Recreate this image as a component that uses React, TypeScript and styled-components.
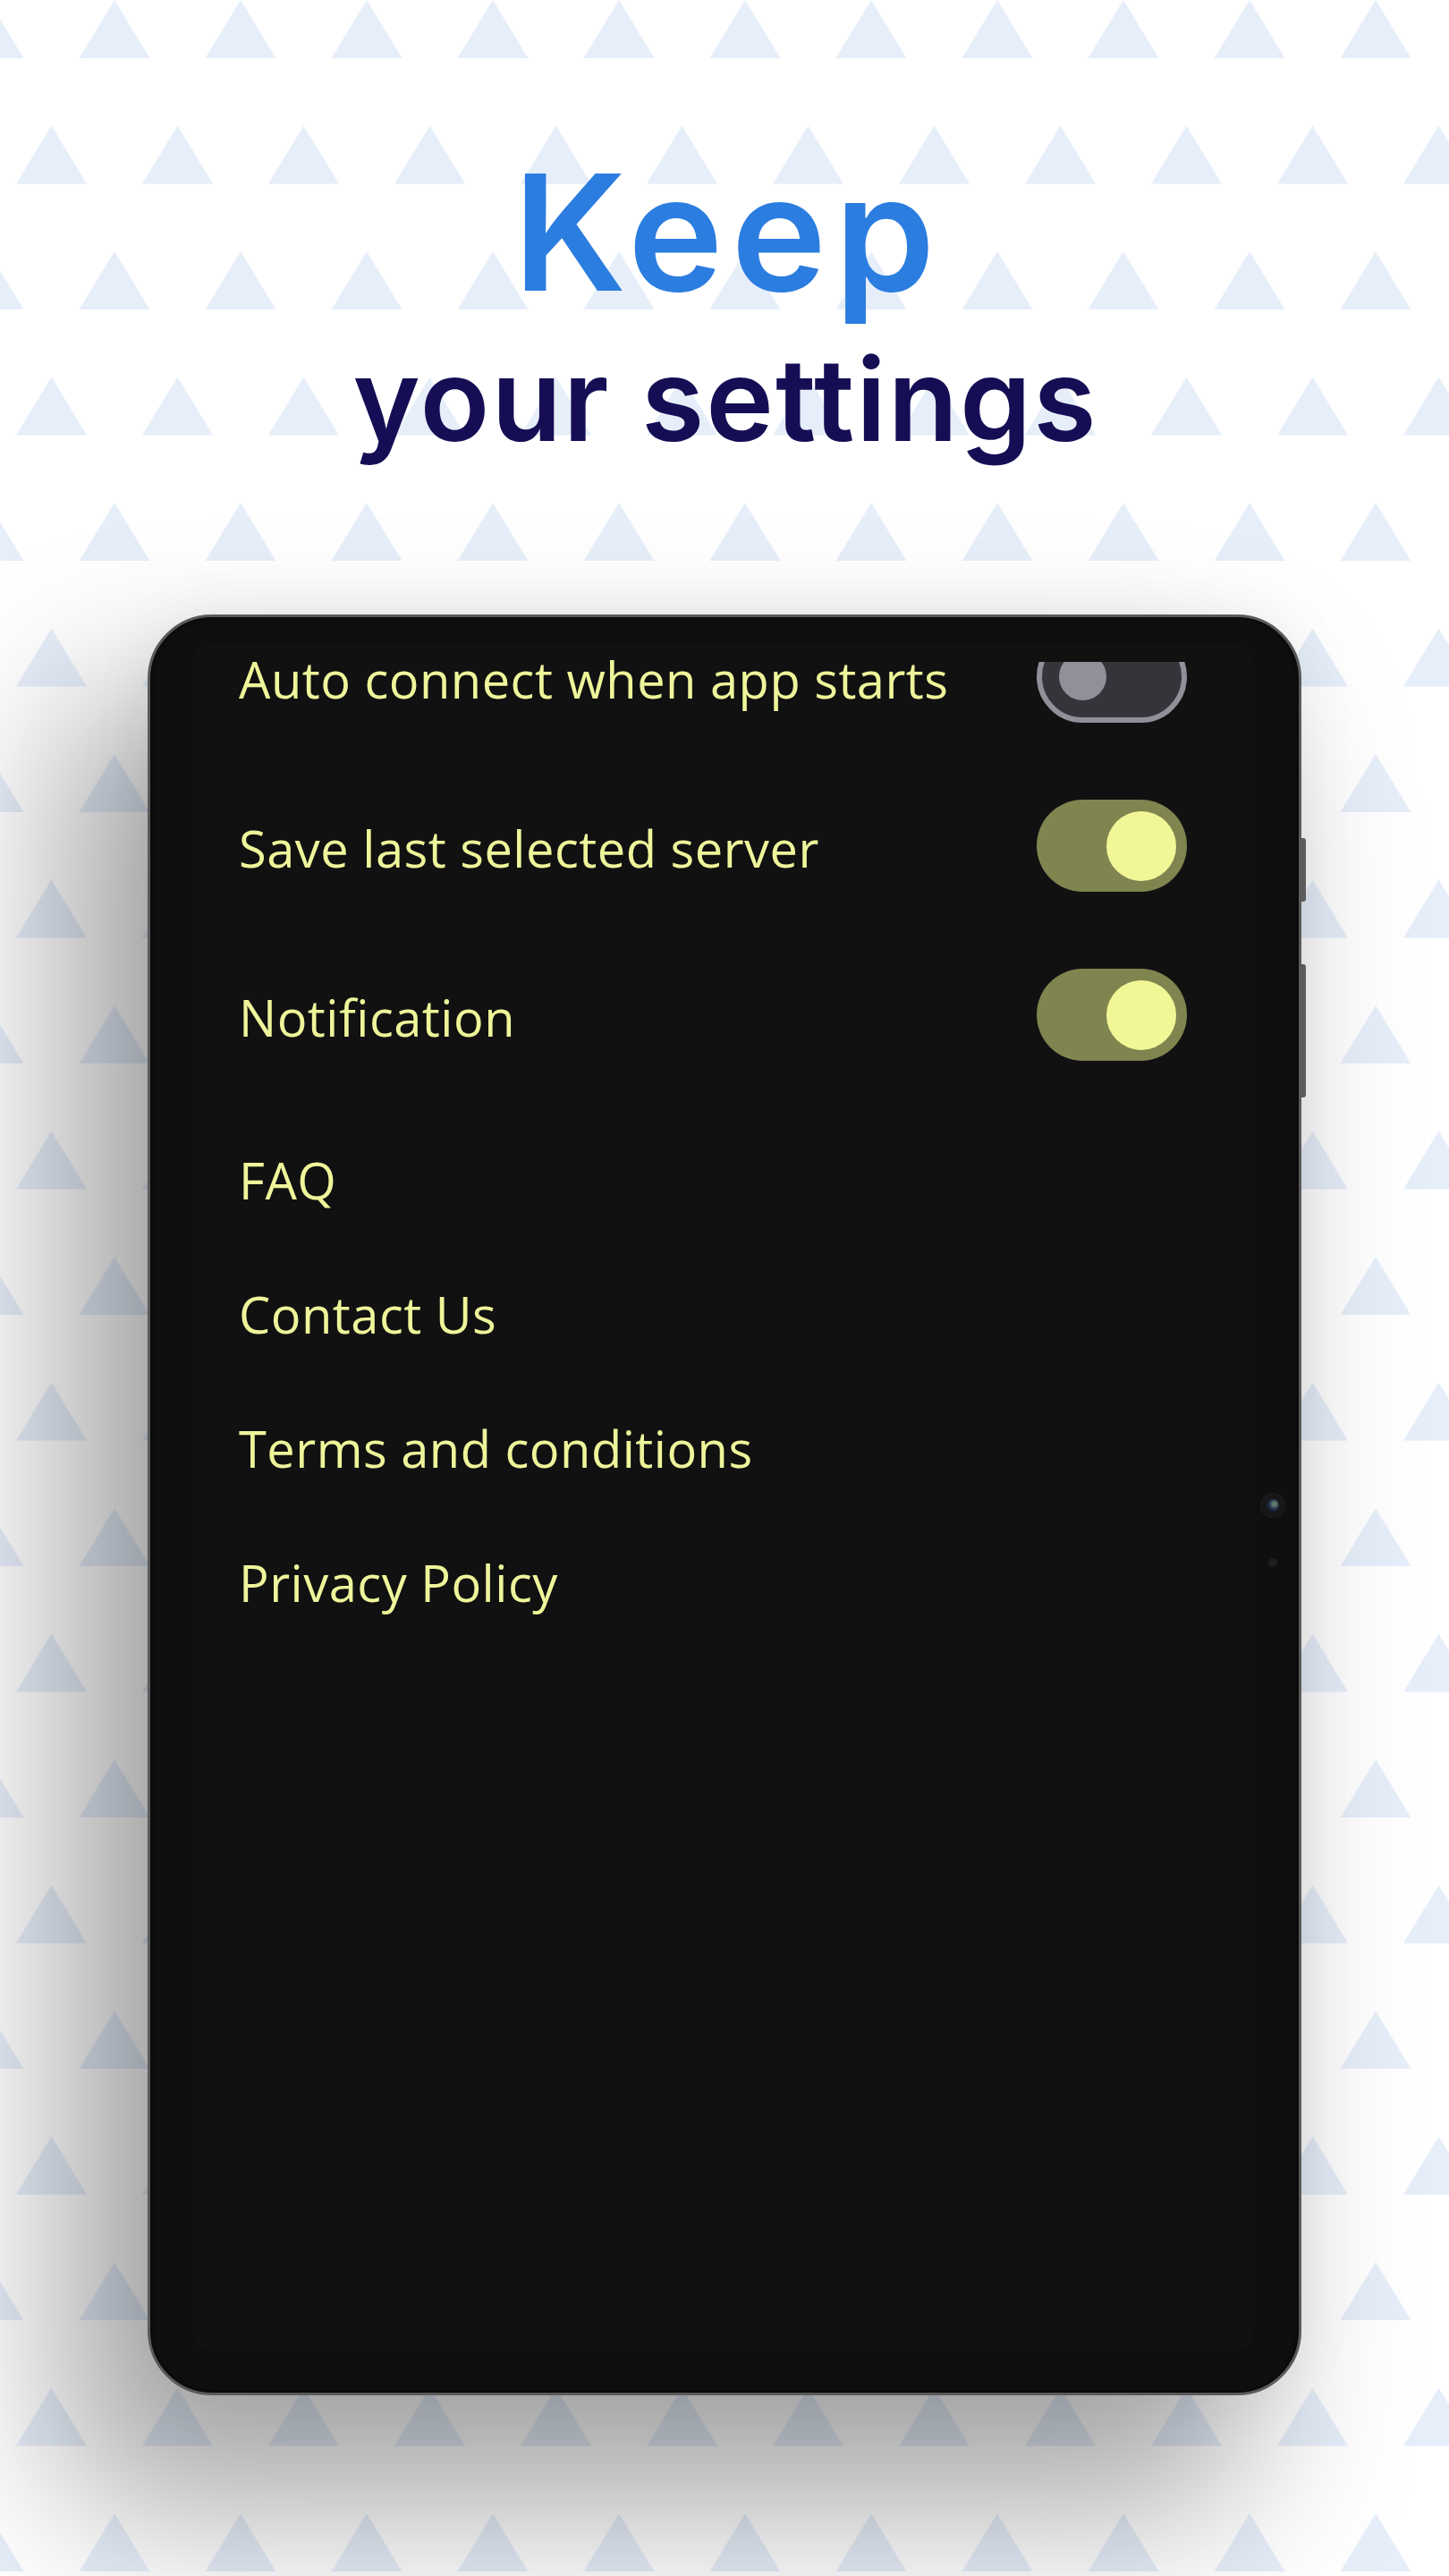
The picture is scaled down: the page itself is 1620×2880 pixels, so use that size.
import React from 'react';
import styled, { createGlobalStyle } from 'styled-components';

const GlobalStyle = createGlobalStyle`
  html, body {
    margin: 0;
    padding: 0;
    background: #ffffff;
  }
  body {
    font-family: "Open Sans", "Liberation Sans", sans-serif;
  }
`;

const Page = styled.div`
  position: relative;
  width: 1620px;
  height: 2880px;
  overflow: hidden;
  background: #ffffff;
`;

const Backdrop = styled.svg`
  position: absolute;
  left: 0;
  top: 0;
  width: 1620px;
  height: 2880px;
  z-index: 0;
`;

const Content = styled.main`
  position: relative;
  z-index: 1;
  display: flex;
  flex-direction: column;
  align-items: center;
  padding-top: 170px;
`;

const Headline = styled.h1`
  margin: 0;
  padding-left: 8px;
  font-family: Inter, "Liberation Sans", sans-serif;
  font-weight: 600;
  font-size: 180px;
  line-height: 180px;
  letter-spacing: 9px;
  color: #2c7de0;
`;

const Subline = styled.h2`
  margin: 33px 0 0;
  padding-left: 2px;
  font-family: Inter, "Liberation Sans", sans-serif;
  font-weight: 600;
  font-size: 128px;
  line-height: 128px;
  letter-spacing: 2px;
  color: #160e55;
`;

const Phone = styled.div`
  position: relative;
  box-sizing: border-box;
  margin-top: 176px;
  width: 1290px;
  height: 1991px;
  border-radius: 72px;
  border: 3px solid #5a5a5a;
  background: #0f0f0f;
  padding: 30px 50px 48px 47px;
  box-shadow: -80px 110px 180px 20px rgba(0, 0, 0, 0.34), 0 0 70px rgba(0, 0, 0, 0.06),
    inset 0 0 6px rgba(0, 0, 0, 0.7);
`;

const SideButton = styled.span<{ $top: number; $height: number }>`
  position: absolute;
  right: -8px;
  top: ${(p) => p.$top}px;
  width: 5px;
  height: ${(p) => p.$height}px;
  border-radius: 0 3px 3px 0;
  background: #5c5c5c;
`;

const Camera = styled.span`
  position: absolute;
  right: 16px;
  top: 980px;
  width: 26px;
  height: 26px;
  border-radius: 50%;
  background: #171717;
  box-shadow: 0 0 0 1px #1f1f1f;
  display: flex;
  align-items: center;
  justify-content: center;

  &::after {
    content: "";
    width: 14px;
    height: 14px;
    border-radius: 50%;
    background: radial-gradient(circle at 62% 40%, #5d7a6e 0 18%, #26304a 45%, #0d1018 100%);
  }
`;

const Sensor = styled.span`
  position: absolute;
  right: 24px;
  top: 1052px;
  width: 10px;
  height: 10px;
  border-radius: 50%;
  background: #1e1e1e;
`;

const Screen = styled.div`
  box-sizing: border-box;
  height: 100%;
  border-radius: 20px;
  background: #111111;
  overflow: hidden;
  padding: 0 75px 0 52px;
`;

const SettingsList = styled.div`
  display: flex;
  flex-direction: column;
`;

/* first row, partly scrolled out of view */
const PartialRow = styled.div`
  box-sizing: border-box;
  display: flex;
  align-items: flex-end;
  justify-content: space-between;
  height: 131px;
  padding-bottom: 43px;
`;

const SwitchClip = styled.span`
  display: flex;
  align-items: flex-end;
  height: 68px;
  overflow: hidden;
`;

const ToggleRow = styled.div`
  display: flex;
  align-items: center;
  justify-content: space-between;
  height: 189px;
`;

const LinkGroup = styled.div`
  display: flex;
  flex-direction: column;
  margin-top: 15px;
`;

const LinkRow = styled.div`
  display: flex;
  align-items: center;
  height: 150px;
`;

const Label = styled.span<{ $drop?: number; $lift?: number }>`
  display: block;
  font-family: "Open Sans", "Liberation Sans", sans-serif;
  font-weight: 400;
  font-size: 56px;
  line-height: 44px;
  letter-spacing: 0.5px;
  color: #eef59a;
  white-space: nowrap;
  margin-top: ${(p) => p.$drop ?? 0}px;
  margin-bottom: ${(p) => p.$lift ?? 0}px;
`;

const Track = styled.span<{ $on: boolean }>`
  box-sizing: border-box;
  display: flex;
  align-items: center;
  justify-content: ${(p) => (p.$on ? 'flex-end' : 'flex-start')};
  width: 168px;
  height: 103px;
  border-radius: 52px;
  padding: ${(p) => (p.$on ? '0 12px' : '0 19px')};
  background: ${(p) => (p.$on ? '#80844f' : '#36343b')};
  border: ${(p) => (p.$on ? 'none' : '6px solid #938f99')};
  flex-shrink: 0;
`;

const Thumb = styled.span<{ $on: boolean }>`
  width: ${(p) => (p.$on ? 78 : 53)}px;
  height: ${(p) => (p.$on ? 78 : 53)}px;
  border-radius: 50%;
  background: ${(p) => (p.$on ? '#f1f797' : '#938f99')};
`;

const Switch = ({ on }: { on: boolean }) => (
  <Track $on={on} role="switch" aria-checked={on}>
    <Thumb $on={on} />
  </Track>
);

const toggles = [
  { label: 'Save last selected server', on: true },
  { label: 'Notification', on: true },
];

const links = ['FAQ', 'Contact Us', 'Terms and conditions', 'Privacy Policy'];

export default function App() {
  return (
    <Page>
      <GlobalStyle />
      <Backdrop viewBox="0 0 1620 2880" aria-hidden="true">
        <defs>
          <pattern id="triangles" x="57.5" y="0" width="141" height="281" patternUnits="userSpaceOnUse">
            <polygon points="70.5,0 110,65 31,65" fill="#e6eefa" />
            <polygon points="0,140.5 39.5,205.5 -39.5,205.5" fill="#e6eefa" />
            <polygon points="141,140.5 180.5,205.5 101.5,205.5" fill="#e6eefa" />
          </pattern>
        </defs>
        <rect x="0" y="0" width="1620" height="2880" fill="url(#triangles)" />
      </Backdrop>
      <Content>
        <Headline>Keep</Headline>
        <Subline>your settings</Subline>
        <Phone>
          <SideButton $top={247} $height={71} />
          <SideButton $top={388} $height={149} />
          <Camera />
          <Sensor />
          <Screen>
            <SettingsList>
              <PartialRow>
                <Label $lift={27}>Auto connect when app starts</Label>
                <SwitchClip>
                  <Switch on={false} />
                </SwitchClip>
              </PartialRow>
              {toggles.map((t) => (
                <ToggleRow key={t.label}>
                  <Label $drop={5}>{t.label}</Label>
                  <Switch on={t.on} />
                </ToggleRow>
              ))}
              <LinkGroup>
                {links.map((l) => (
                  <LinkRow key={l}>
                    <Label>{l}</Label>
                  </LinkRow>
                ))}
              </LinkGroup>
            </SettingsList>
          </Screen>
        </Phone>
      </Content>
    </Page>
  );
}
